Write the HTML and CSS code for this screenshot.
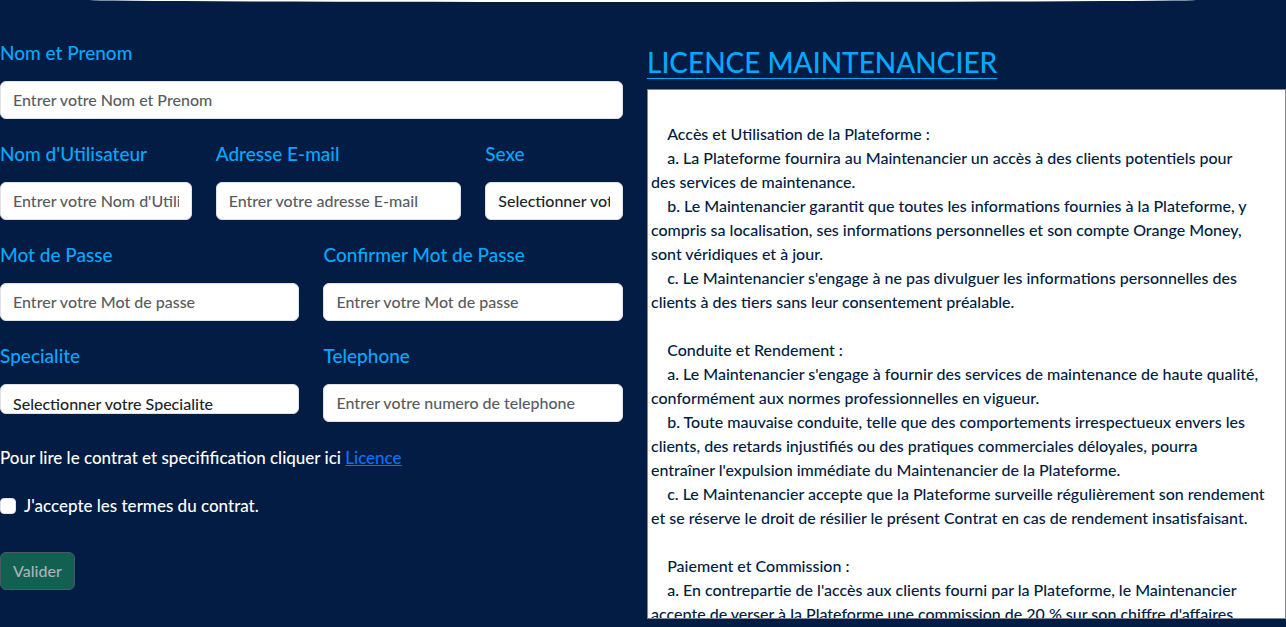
FILE: index.html
```html
<!DOCTYPE html>
<html lang="fr">
<head>
<meta charset="utf-8">
<meta name="viewport" content="width=device-width, initial-scale=1">
<title>Inscription Maintenancier</title>
<link rel="stylesheet" href="styles.css">
</head>
<body>
<div class="curve"></div>
<main class="page">
  <form class="form">
    <div class="field full">
      <label for="nom">Nom et Prenom</label>
      <input class="control" id="nom" type="text" placeholder="Entrer votre Nom et Prenom">
    </div>
    <div class="field third">
      <label for="user">Nom d'Utilisateur</label>
      <input class="control" id="user" type="text" placeholder="Entrer votre Nom d'Utilisateur">
    </div>
    <div class="field wide">
      <label for="mail">Adresse E-mail</label>
      <input class="control" id="mail" type="email" placeholder="Entrer votre adresse E-mail">
    </div>
    <div class="field quarter">
      <label for="sexe">Sexe</label>
      <select class="control" id="sexe"><option>Selectionner votre Sexe</option></select>
    </div>
    <div class="field half">
      <label for="pass">Mot de Passe</label>
      <input class="control" id="pass" type="password" placeholder="Entrer votre Mot de passe">
    </div>
    <div class="field half">
      <label for="confirm">Confirmer Mot de Passe</label>
      <input class="control" id="confirm" type="password" placeholder="Entrer votre Mot de passe">
    </div>
    <div class="field half">
      <label for="spec">Specialite</label>
      <select class="control short" id="spec"><option>Selectionner votre Specialite</option></select>
    </div>
    <div class="field half">
      <label for="tel">Telephone</label>
      <input class="control" id="tel" type="tel" placeholder="Entrer votre numero de telephone">
    </div>
    <p class="note full">Pour lire le contrat et specifification cliquer ici <a href="#licence">Licence</a></p>
    <div class="check full">
      <input id="accept" type="checkbox">
      <label for="accept">J'accepte les termes du contrat.</label>
    </div>
    <div class="full"><button class="submit" type="submit" disabled>Valider</button></div>
  </form>
  <section class="licence">
    <h2 id="licence">LICENCE MAINTENANCIER</h2>
    <textarea class="contract" aria-labelledby="licence" readonly>

    Accès et Utilisation de la Plateforme :
    a. La Plateforme fournira au Maintenancier un accès à des clients potentiels pour
des services de maintenance.
    b. Le Maintenancier garantit que toutes les informations fournies à la Plateforme, y
compris sa localisation, ses informations personnelles et son compte Orange Money,
sont véridiques et à jour.
    c. Le Maintenancier s'engage à ne pas divulguer les informations personnelles des
clients à des tiers sans leur consentement préalable.

    Conduite et Rendement :
    a. Le Maintenancier s'engage à fournir des services de maintenance de haute qualité,
conformément aux normes professionnelles en vigueur.
    b. Toute mauvaise conduite, telle que des comportements irrespectueux envers les
clients, des retards injustifiés ou des pratiques commerciales déloyales, pourra
entraîner l'expulsion immédiate du Maintenancier de la Plateforme.
    c. Le Maintenancier accepte que la Plateforme surveille régulièrement son rendement
et se réserve le droit de résilier le présent Contrat en cas de rendement insatisfaisant.

    Paiement et Commission :
    a. En contrepartie de l'accès aux clients fourni par la Plateforme, le Maintenancier
accepte de verser à la Plateforme une commission de 20 % sur son chiffre d'affaires</textarea>
  </section>
</main>
</body>
</html>
```
FILE: styles.css
```css
* { box-sizing: border-box; }
body {
  margin: 0;
  background: #021c43;
  color: #fff;
  font: 500 16px/24px Lato, "Liberation Sans", sans-serif;
}
.curve {
  height: 2px;
  margin: 0 7%;
  background: #fff;
  border-radius: 0 0 50% 50% / 0 0 2px 2px;
}
.page {
  display: grid;
  grid-template-columns: 623fr 639fr;
  gap: 24px;
  padding-top: 32px;
}
.form {
  display: grid;
  grid-template-columns: repeat(12, minmax(0, 1fr));
  column-gap: 24px;
  row-gap: 16px;
  align-content: start;
}
.full { grid-column: span 12; }
.half { grid-column: span 6; }
.wide { grid-column: span 5; }
.third { grid-column: span 4; }
.quarter { grid-column: span 3; }
.field label {
  display: block;
  margin-bottom: 9px;
  color: #00a9ff;
  font-size: 19px;
  line-height: 38px;
  white-space: nowrap;
}
.control {
  display: block;
  width: 100%;
  height: 38px;
  padding: 5px 12px 7px;
  border: 1px solid #dee2e6;
  border-radius: 6px;
  background: #fff;
  color: #212529;
  font: inherit;
  appearance: none;
}
select.control { padding: 6px 12px; }
.control::placeholder { color: #595c5f; opacity: 1; }
select.short { height: 30px; padding: 7px 12px 2px; }
.note { margin: 8px 0; font-size: 17px; }
.note a { color: #0d6efd; }
.check { display: flex; align-items: center; gap: 8px; font-size: 17px; }
.check input {
  width: 16px;
  height: 16px;
  margin: 0;
  border: 1px solid #dee2e6;
  border-radius: 4px;
  background: #fff;
  appearance: none;
}
.submit {
  height: 38px;
  margin-top: 18px;
  padding: 6px 12px;
  border: 1px solid #47596a;
  border-radius: 6px;
  background: #126150;
  color: #a6b3bb;
  font: inherit;
}
.licence h2 {
  margin: 8px 0 7px;
  color: #00a9ff;
  font-size: 28px;
  font-weight: 500;
  line-height: 40px;
  text-decoration: underline 1px;
  text-underline-offset: 5px;
}
.contract {
  display: block;
  width: 100%;
  height: 530px;
  padding: 8px 3px 2px;
  border: 1px solid #858592;
  background: #fff;
  color: #021c43;
  font: inherit;
  resize: none;
  overflow: hidden;
}
```
